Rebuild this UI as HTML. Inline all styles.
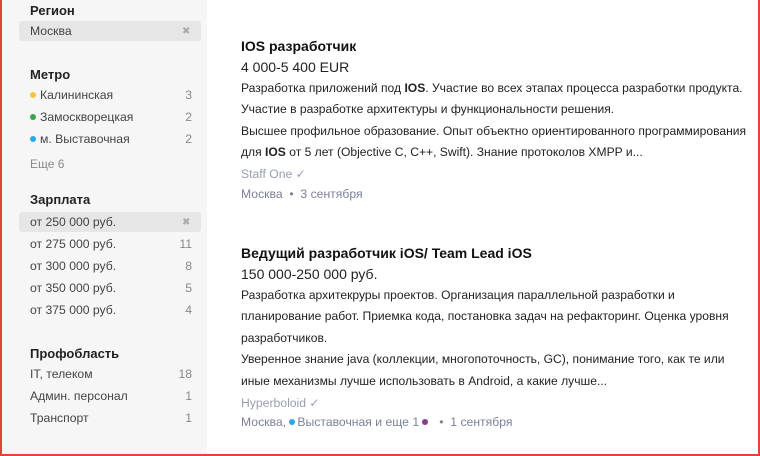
<html><head><style>
body{margin:0;width:760px;height:456px;overflow:hidden;font-family:"Liberation Sans",sans-serif;background:#fff;position:relative}
.b{position:absolute;background:#e0443a}
.side{position:absolute;left:2px;top:0;width:205px;height:456px;background:#f6f6f6}
.t{position:absolute;white-space:nowrap}
.h{font-size:13px;font-weight:bold;color:#222;left:30px}
.i{font-size:12.2px;color:#444;left:30px}
.c{font-size:12.2px;color:#888;right:0;width:40px;text-align:right}
.pill{position:absolute;left:19px;width:182px;height:20px;background:#e6e6e6;border-radius:3px}
.x{position:absolute;left:182px;font-size:10px;color:#aaa}
.d{display:inline-block;width:6px;height:6px;border-radius:50%;margin-right:4px;vertical-align:1px}
.m{left:241px;font-size:12.1px;color:#222}
.tt{left:241px;font-size:14px;font-weight:bold;color:#111}
.s{left:241px;font-size:14px;color:#222}
.g{left:241px;font-size:12.2px;color:#7a819a}
</style></head><body>
<div class="side"></div>
<div class="t h" style="top:3px">Регион</div>
<div class="pill" style="top:21px"></div>
<div class="t i" style="top:24px">Москва</div><div class="t x" style="top:26px">✖</div>
<div class="t h" style="top:67px">Метро</div>
<div class="t i" style="top:88px"><span class="d" style="background:#f6c343"></span>Калининская</div><div class="t c" style="top:88px;left:152px">3</div>
<div class="t i" style="top:110px"><span class="d" style="background:#3aa648"></span>Замоскворецкая</div><div class="t c" style="top:110px;left:152px">2</div>
<div class="t i" style="top:132px"><span class="d" style="background:#29a9e8"></span>м. Выставочная</div><div class="t c" style="top:132px;left:152px">2</div>
<div class="t i" style="top:157px;color:#888;font-size:12px">Еще 6</div>
<div class="t h" style="top:192px">Зарплата</div>
<div class="pill" style="top:212px"></div>
<div class="t i" style="top:215px">от 250 000 руб.</div><div class="t x" style="top:217px">✖</div>
<div class="t i" style="top:237px">от 275 000 руб.</div><div class="t c" style="top:237px;left:152px">11</div>
<div class="t i" style="top:259px">от 300 000 руб.</div><div class="t c" style="top:259px;left:152px">8</div>
<div class="t i" style="top:281px">от 350 000 руб.</div><div class="t c" style="top:281px;left:152px">5</div>
<div class="t i" style="top:303px">от 375 000 руб.</div><div class="t c" style="top:303px;left:152px">4</div>
<div class="t h" style="top:346px">Профобласть</div>
<div class="t i" style="top:367px">IT, телеком</div><div class="t c" style="top:367px;left:152px">18</div>
<div class="t i" style="top:389px">Админ. персонал</div><div class="t c" style="top:389px;left:152px">1</div>
<div class="t i" style="top:411px">Транспорт</div><div class="t c" style="top:411px;left:152px">1</div>

<div class="t tt" style="top:38px">IOS разработчик</div>
<div class="t s" style="top:59px">4 000-5 400 EUR</div>
<div class="t m" style="top:81px">Разработка приложений под <b>IOS</b>. Участие во всех этапах процесса разработки продукта.</div>
<div class="t m" style="top:102px">Участие в разработке архитектуры и функциональности решения.</div>
<div class="t m" style="top:124px">Высшее профильное образование. Опыт объектно ориентированного программирования</div>
<div class="t m" style="top:145px">для <b>IOS</b> от 5 лет (Objective C, C++, Swift). Знание протоколов XMPP и...</div>
<div class="t g" style="top:167px;color:#999db0">Staff One ✓</div>
<div class="t g" style="top:187px">Москва &nbsp;•&nbsp; 3 сентября</div>

<div class="t tt" style="top:245px">Ведущий разработчик iOS/ Team Lead iOS</div>
<div class="t s" style="top:266px">150 000-250 000 руб.</div>
<div class="t m" style="top:288px">Разработка архитекруры проектов. Организация параллельной разработки и</div>
<div class="t m" style="top:309px">планирование работ. Приемка кода, постановка задач на рефакторинг. Оценка уровня</div>
<div class="t m" style="top:331px">разработчиков.</div>
<div class="t m" style="top:352px">Уверенное знание java (коллекции, многопоточность, GC), понимание того, как те или</div>
<div class="t m" style="top:374px">иные механизмы лучше использовать в Android, а какие лучше...</div>
<div class="t g" style="top:396px;color:#999db0">Hyperboloid ✓</div>
<div class="t g" style="top:415px">Москва, <span class="d" style="background:#29a9e8;margin-right:2px"></span>Выставочная и еще 1 <span class="d" style="background:#8e3a8a"></span> &nbsp;•&nbsp; 1 сентября</div>

<div class="b" style="left:0;top:0;width:2px;height:456px"></div>
<div class="b" style="right:0;top:0;width:2px;height:456px"></div>
<div class="b" style="left:0;bottom:0;width:760px;height:2px"></div>
</body></html>
